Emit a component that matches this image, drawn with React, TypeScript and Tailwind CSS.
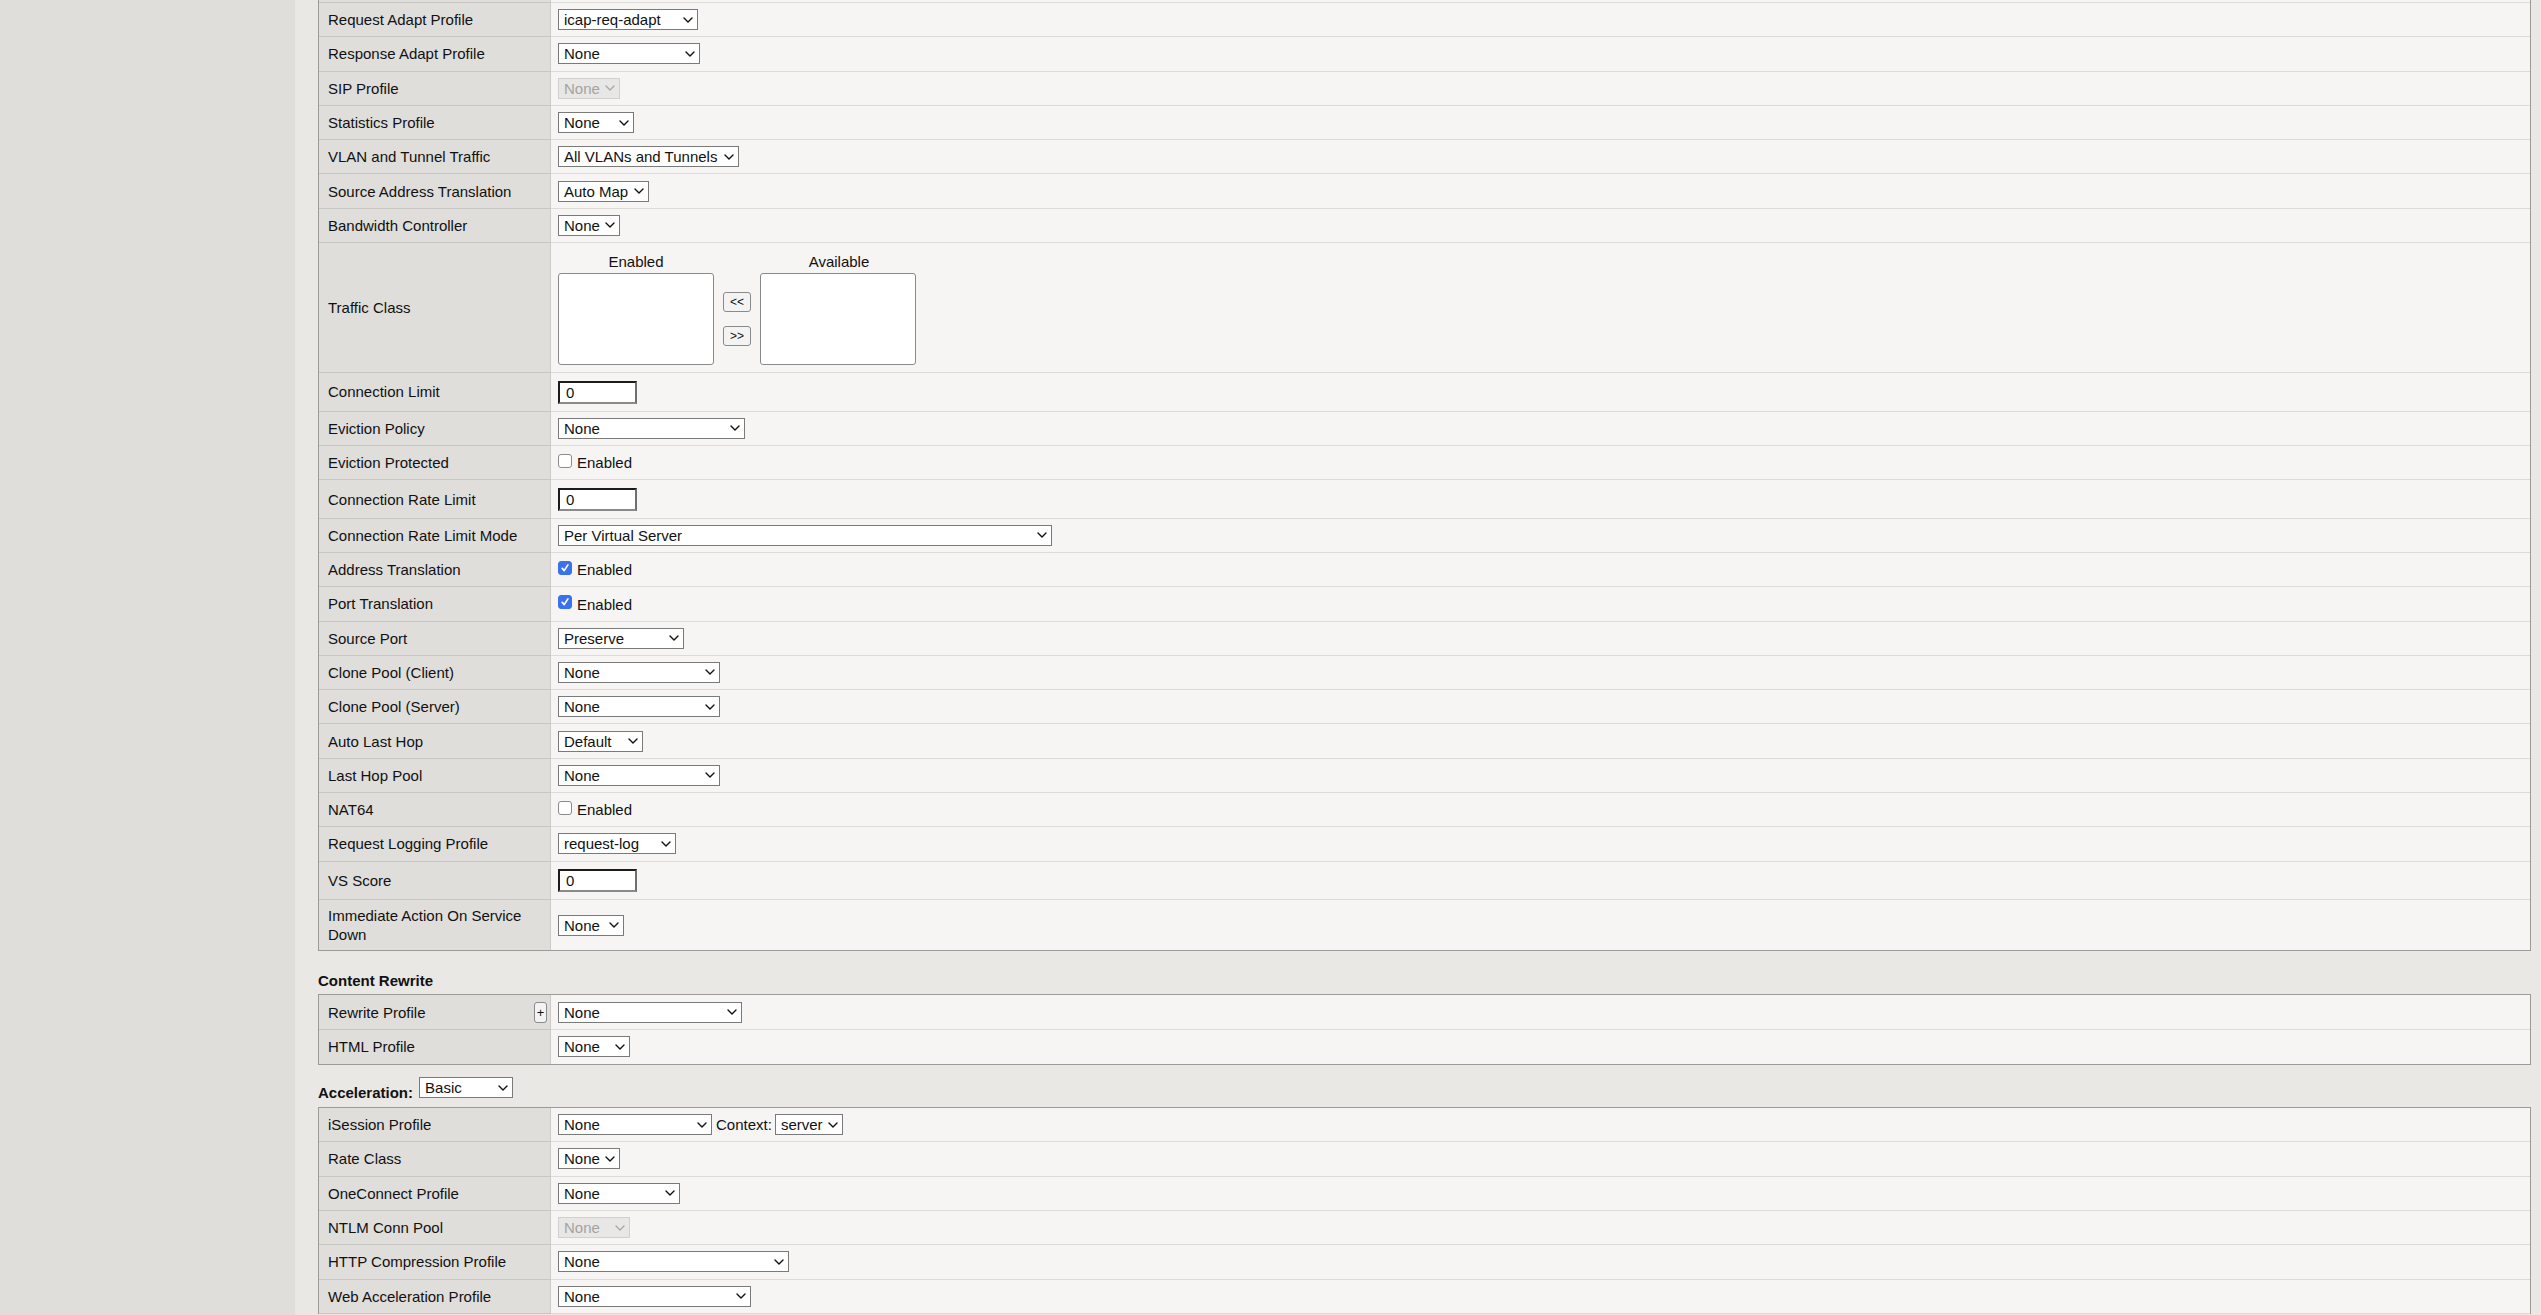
import React from "react";
import clsx from "clsx";

function Chevron({ disabled }: { disabled?: boolean }) {
  return (
    <svg width="10" height="6" viewBox="0 0 10 6" className="shrink-0">
      <path
        d="M1 1 L5 5 L9 1"
        fill="none"
        stroke={disabled ? "#a9a9a9" : "#111"}
        strokeWidth="1.4"
        strokeLinecap="round"
        strokeLinejoin="round"
      />
    </svg>
  );
}

function Sel({ w, v, disabled }: { w: string; v: string; disabled?: boolean }) {
  return (
    <div
      className={clsx(
        "flex h-[21px] shrink-0 items-center justify-between border pl-[5px] pr-[4px]",
        w,
        disabled ? "border-[#d0d0d0] bg-[#e8e7e5] text-[#a3a3a3]" : "border-[#7a7a7a] bg-white text-[#111]"
      )}
    >
      <span className="whitespace-nowrap leading-none">{v}</span>
      <Chevron disabled={disabled} />
    </div>
  );
}

function Inp({ v }: { v: string }) {
  return (
    <div className="mt-[1px] flex h-[23px] w-[79px] items-center border-2 border-t-[#1c1c1c] border-l-[#1c1c1c] border-r-[#6f6f6f] border-b-[#8a8a8a] bg-white pl-[6px] leading-none text-[#111]">
      {v}
    </div>
  );
}

function Check({ checked }: { checked?: boolean }) {
  return (
    <div className="mt-[2px] flex items-center gap-[5px]">
      <div
        className={clsx(
          "mb-[5px] flex h-[14px] w-[14px] items-center justify-center rounded-[3px] border",
          checked ? "border-[#3a72ee] bg-[#3a72ee]" : "border-[#8c8c8c] bg-white"
        )}
      >
        {checked && (
          <svg width="10" height="10" viewBox="0 0 10 10">
            <path d="M2.2 5.4 L4.2 7.6 L7.9 1.9" fill="none" stroke="#fff" strokeWidth="1.7" strokeLinecap="round" strokeLinejoin="round" />
          </svg>
        )}
      </div>
      <span className="text-[#111]">Enabled</span>
    </div>
  );
}

function Row({
  label,
  h = "h-[34.3px]",
  last,
  extra,
  children,
}: {
  label: string;
  h?: string;
  last?: boolean;
  extra?: React.ReactNode;
  children?: React.ReactNode;
}) {
  return (
    <div className={clsx("grid grid-cols-[232px_1fr]", h)}>
      <div
        className={clsx(
          "flex items-center justify-between border-r border-r-[#cbcac6] bg-[#dfdedb] pl-[9px] pr-[3px] text-[#111]",
          !last && "border-b border-b-[#c7c6c2]"
        )}
      >
        <span className="leading-[19px]">{label}</span>
        {extra}
      </div>
      <div className={clsx("flex items-center bg-[#f6f5f3] pl-[7px]", !last && "border-b border-b-[#dcdbd8]")}>
        {children}
      </div>
    </div>
  );
}

function SmallBtn({ t }: { t: string }) {
  return (
    <div className="flex h-[20px] w-[28px] items-center justify-center rounded-[3px] border border-[#8a8a8a] bg-[#f3f3f3] text-[12px] leading-none text-[#111]">
      {t}
    </div>
  );
}

export default function App() {
  return (
    <div className="flex h-[1315px] overflow-hidden bg-[#e9e8e4] font-['Liberation_Sans',Arial,sans-serif] text-[15px] text-[#111]">
      <div className="w-[295px] shrink-0 bg-[#dfdeda]" />
      <div className="flex min-w-0 flex-1 flex-col pl-[23px] pr-[10px]">
        {/* Main table (scrolled) */}
        <div className="border-x border-b border-[#9c9b98]">
          <div className="grid h-[3px] grid-cols-[232px_1fr]">
            <div className="border-b border-r border-b-[#c7c6c2] border-r-[#cbcac6] bg-[#dfdedb]" />
            <div className="border-b border-b-[#dcdbd8] bg-[#f6f5f3]" />
          </div>
          <Row label="Request Adapt Profile">
            <Sel w="w-[140px]" v="icap-req-adapt" />
          </Row>
          <Row label="Response Adapt Profile">
            <Sel w="w-[142px]" v="None" />
          </Row>
          <Row label="SIP Profile">
            <Sel w="w-[62px]" v="None" disabled />
          </Row>
          <Row label="Statistics Profile">
            <Sel w="w-[76px]" v="None" />
          </Row>
          <Row label="VLAN and Tunnel Traffic">
            <Sel w="w-[181px]" v="All VLANs and Tunnels" />
          </Row>
          <Row label="Source Address Translation">
            <Sel w="w-[91px]" v="Auto Map" />
          </Row>
          <Row label="Bandwidth Controller">
            <Sel w="w-[62px]" v="None" />
          </Row>
          <Row label="Traffic Class" h="h-[130px]">
            <div className="flex flex-col pt-[3px]">
              <div className="flex h-[17px] items-center leading-none">
                <div className="w-[156px] text-center">Enabled</div>
                <div className="w-[47px]" />
                <div className="w-[156px] text-center">Available</div>
              </div>
              <div className="mt-[3px] flex items-center">
                <div className="h-[92px] w-[156px] rounded-[3px] border border-[#8a8a8a] bg-white" />
                <div className="mx-[9px] flex flex-col gap-[14px]">
                  <SmallBtn t="<<" />
                  <SmallBtn t=">>" />
                </div>
                <div className="h-[92px] w-[156px] rounded-[3px] border border-[#8a8a8a] bg-white" />
              </div>
            </div>
          </Row>
          <Row label="Connection Limit" h="h-[38.7px]">
            <Inp v="0" />
          </Row>
          <Row label="Eviction Policy">
            <Sel w="w-[187px]" v="None" />
          </Row>
          <Row label="Eviction Protected">
            <Check />
          </Row>
          <Row label="Connection Rate Limit" h="h-[38.3px]">
            <Inp v="0" />
          </Row>
          <Row label="Connection Rate Limit Mode">
            <Sel w="w-[494px]" v="Per Virtual Server" />
          </Row>
          <Row label="Address Translation">
            <Check checked />
          </Row>
          <Row label="Port Translation">
            <Check checked />
          </Row>
          <Row label="Source Port">
            <Sel w="w-[126px]" v="Preserve" />
          </Row>
          <Row label="Clone Pool (Client)">
            <Sel w="w-[162px]" v="None" />
          </Row>
          <Row label="Clone Pool (Server)">
            <Sel w="w-[162px]" v="None" />
          </Row>
          <Row label="Auto Last Hop">
            <Sel w="w-[85px]" v="Default" />
          </Row>
          <Row label="Last Hop Pool">
            <Sel w="w-[162px]" v="None" />
          </Row>
          <Row label="NAT64">
            <Check />
          </Row>
          <Row label="Request Logging Profile">
            <Sel w="w-[118px]" v="request-log" />
          </Row>
          <Row label="VS Score" h="h-[38.3px]">
            <Inp v="0" />
          </Row>
          <Row label="Immediate Action On Service Down" h="h-[50.5px]" last>
            <Sel w="w-[66px]" v="None" />
          </Row>
        </div>

        {/* Content Rewrite */}
        <div className="flex h-[43px] items-end pb-[5px] font-bold leading-[17px]">Content Rewrite</div>
        <div className="border border-[#9c9b98]">
          <Row
            label="Rewrite Profile"
            extra={
              <div className="flex h-[21px] w-[13px] items-center justify-center rounded-[3px] border border-[#8a8a8a] bg-[#f3f3f3] text-[13px] leading-none">
                +
              </div>
            }
          >
            <Sel w="w-[184px]" v="None" />
          </Row>
          <Row label="HTML Profile" last>
            <Sel w="w-[72px]" v="None" />
          </Row>
        </div>

        {/* Acceleration */}
        <div className="flex h-[42px] items-end pb-[6px]">
          <span className="font-bold leading-[17px]">Acceleration:</span>
          <div className="mb-[3px] ml-[6px]">
            <Sel w="w-[94px]" v="Basic" />
          </div>
        </div>
        <div className="border-x border-t border-[#9c9b98]">
          <Row label="iSession Profile">
            <Sel w="w-[154px]" v="None" />
            <span className="ml-[4px] mr-[3px] leading-none">Context:</span>
            <Sel w="w-[68px]" v="server" />
          </Row>
          <Row label="Rate Class">
            <Sel w="w-[62px]" v="None" />
          </Row>
          <Row label="OneConnect Profile">
            <Sel w="w-[122px]" v="None" />
          </Row>
          <Row label="NTLM Conn Pool">
            <Sel w="w-[72px]" v="None" disabled />
          </Row>
          <Row label="HTTP Compression Profile">
            <Sel w="w-[231px]" v="None" />
          </Row>
          <Row label="Web Acceleration Profile">
            <Sel w="w-[193px]" v="None" />
          </Row>
        </div>
      </div>
    </div>
  );
}
